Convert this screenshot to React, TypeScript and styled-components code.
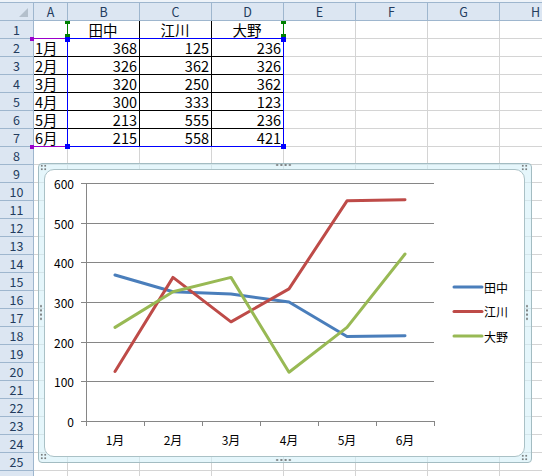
import styled, { createGlobalStyle } from "styled-components";

const GlobalStyle = createGlobalStyle`
  html, body {
    margin: 0;
    padding: 0;
    background: #ffffff;
    overflow: hidden;
  }
  body {
    width: 542px;
    height: 476px;
    font-family: "Noto Sans CJK JP", "Noto Sans", sans-serif;
  }
`;

const COLS = ["A", "B", "C", "D", "E", "F", "G", "H"];
const ROW_COUNT = 26;
const names = ["田中", "江川", "大野"];
const colors = ["#4a7ebb", "#be4b48", "#98b954"];
const table: [string, number, number, number][] = [
  ["1月", 368, 125, 236],
  ["2月", 326, 362, 326],
  ["3月", 320, 250, 362],
  ["4月", 300, 333, 123],
  ["5月", 213, 555, 236],
  ["6月", 215, 558, 421],
];

// Styled components
const Page = styled.div`
  position: relative;
  width: 542px;
  height: 476px;
  overflow: hidden;
  padding-top: 2px;
  box-sizing: border-box;
  background: #eef3f9;
`;

const Sheet = styled.div`
  display: grid;
  grid-template-columns: 34px 34px repeat(7, 72px);
  grid-template-rows: 19px repeat(${ROW_COUNT}, 18px);
  background: #ffffff;
`;

const HeadBase = styled.div`
  box-sizing: border-box;
  background: #dce6f2;
  border-right: 1px solid #9eb6ce;
  border-bottom: 1px solid #9eb6ce;
  color: #233c5e;
  font-size: 12.5px;
  line-height: 15px;
  display: flex;
  align-items: flex-end;
  justify-content: center;
  padding-bottom: 1px;
`;

const ColHead = styled(HeadBase)`
  border-top: 1px solid #9eb6ce;
`;

const Corner = styled(ColHead)`
  position: relative;
  &::after {
    content: "";
    position: absolute;
    right: 5px;
    bottom: 3px;
    border-style: solid;
    border-width: 0 0 9px 9px;
    border-color: transparent transparent #b4c0cc transparent;
  }
`;

const RowHead = styled(HeadBase)``;

const Cell = styled.div<{ $boxed?: boolean; $align?: string }>`
  box-sizing: border-box;
  border-right: 1px solid ${(p) => (p.$boxed ? "#000000" : "#d4d4d4")};
  border-bottom: 1px solid ${(p) => (p.$boxed ? "#000000" : "#d4d4d4")};
  font-size: 14.5px;
  line-height: 17px;
  color: #000;
  display: flex;
  align-items: flex-end;
  justify-content: ${(p) =>
    p.$align === "right" ? "flex-end" : p.$align === "center" ? "center" : "flex-start"};
  padding: 0 2px 0 1px;
  white-space: nowrap;
`;

// selected source ranges of the chart
const Range = styled.div<{ $x: number; $y: number; $w: number; $h: number; $c: string }>`
  position: absolute;
  left: ${(p) => p.$x}px;
  top: ${(p) => p.$y}px;
  width: ${(p) => p.$w}px;
  height: ${(p) => p.$h}px;
  box-sizing: border-box;
  border: 0 solid ${(p) => p.$c};
`;

const ValueRange = styled(Range)`
  border-width: 1px;
`;

const NameRange = styled(Range)`
  border-left-width: 1px;
  border-right-width: 1px;
`;

const CategoryRange = styled(Range)`
  border-top-width: 1px;
  border-bottom-width: 1px;
`;

const Handle = styled.span<{ $c: string; $pos: string; $w?: number; $h?: number }>`
  position: absolute;
  width: ${(p) => p.$w ?? 5}px;
  height: ${(p) => p.$h ?? 5}px;
  background: ${(p) => p.$c};
  ${(p) => (p.$pos.includes("t") ? "top: -2px;" : "bottom: -3px;")}
  ${(p) => (p.$pos.includes("l") ? "left: -3px;" : "right: -3px;")}
`;

const ChartFrame = styled.div`
  position: absolute;
  left: 38px;
  top: 163px;
  width: 494px;
  height: 300px;
  box-sizing: border-box;
  border: 1px solid #a3bcc2;
  border-radius: 4px;
  background: rgba(212, 240, 249, 0.6);
  padding: 5px 6px 5px 5px;
  display: flex;
`;

const ChartInner = styled.div`
  flex: 1;
  border: 1px solid #aac1c6;
  border-radius: 10px;
  background: #ffffff;
  overflow: hidden;
  display: flex;
`;

const Grip = styled.div<{ $x: number; $y: number; $w: number; $h: number; $sx: number; $sy: number }>`
  position: absolute;
  left: ${(p) => p.$x}px;
  top: ${(p) => p.$y}px;
  width: ${(p) => p.$w}px;
  height: ${(p) => p.$h}px;
  background-image: radial-gradient(circle at center, #7b7f80 0, #7b7f80 0.8px, transparent 1.3px);
  background-size: ${(p) => p.$sx}px ${(p) => p.$sy}px;
`;

const ChartText = styled.text`
  font-family: "Noto Sans CJK JP", "Noto Sans", sans-serif;
  font-size: 12px;
  fill: #000;
`;

// Chart geometry (page coordinates)
const X0 = 86;
const X1 = 434;
const Y_TOP = 183;
const Y_ZERO = 421;
const STEP = (X1 - X0) / 6;
const yOf = (v: number) => Y_ZERO - (v * (Y_ZERO - Y_TOP)) / 600;
const xOf = (i: number) => X0 + STEP * (i + 0.5);

const LineChart = () => {
  const ticks = [0, 100, 200, 300, 400, 500, 600];
  return (
    <svg width="479" height="286" viewBox="45 170 479 286">
      {ticks.map((t) => {
        const y = Math.round(yOf(t)) + 0.5;
        return (
          <g key={t}>
            <line x1={81} x2={X1} y1={y} y2={y} stroke="#868686" strokeWidth={1} />
            <ChartText x={74} y={y} textAnchor="end" dominantBaseline="central">
              {t}
            </ChartText>
          </g>
        );
      })}
      <line x1={X0 + 0.5} x2={X0 + 0.5} y1={Y_TOP} y2={Y_ZERO + 5} stroke="#868686" />
      {Array.from({ length: 6 }, (_, i) => {
        const x = Math.round(X0 + STEP * (i + 1)) + 0.5;
        return <line key={i} x1={x} x2={x} y1={Y_ZERO} y2={Y_ZERO + 5} stroke="#868686" />;
      })}
      {table.map((row, i) => (
        <ChartText key={row[0]} x={xOf(i)} y={445} textAnchor="middle">
          {row[0]}
        </ChartText>
      ))}
      {names.map((n, s) => (
        <polyline
          key={n}
          fill="none"
          stroke={colors[s]}
          strokeWidth={3}
          strokeLinejoin="round"
          strokeLinecap="round"
          points={table.map((row, i) => `${xOf(i)},${yOf(row[s + 1] as number)}`).join(" ")}
        />
      ))}
      {names.map((n, s) => {
        const y = 287 + s * 24.5;
        return (
          <g key={n}>
            <line x1={454} x2={482} y1={y} y2={y} stroke={colors[s]} strokeWidth={3} strokeLinecap="round" />
            <ChartText x={484} y={y} dominantBaseline="central" fontSize="12.5">
              {n}
            </ChartText>
          </g>
        );
      })}
    </svg>
  );
};

// Component
const App = () => {
  const cellText = (r: number, c: number): { text: string; align: string } => {
    if (r === 1) {
      if (c >= 1 && c <= 3) return { text: names[c - 1], align: "center" };
      return { text: "", align: "left" };
    }
    if (r >= 2 && r <= 7) {
      const row = table[r - 2];
      if (c === 0) return { text: row[0], align: "left" };
      if (c <= 3) return { text: String(row[c]), align: "right" };
    }
    return { text: "", align: "left" };
  };

  return (
    <>
      <GlobalStyle />
      <Page>
        <Sheet>
          <Corner />
          {COLS.map((c) => (
            <ColHead key={c}>{c}</ColHead>
          ))}
          {Array.from({ length: ROW_COUNT }, (_, ri) => {
            const r = ri + 1;
            return [
              <RowHead key={`h${r}`}>{r}</RowHead>,
              ...COLS.map((col, c) => {
                const { text, align } = cellText(r, c);
                return (
                  <Cell key={`${col}${r}`} $boxed={r <= 7 && c <= 3} $align={align}>
                    {text}
                  </Cell>
                );
              }),
            ];
          })}
        </Sheet>

        <NameRange $x={67} $y={21} $w={217} $h={17} $c="#008000">
          <Handle $c="#008000" $pos="tl" $w={5} $h={3} style={{ top: 0 }} />
          <Handle $c="#008000" $pos="tr" $w={5} $h={3} style={{ top: 0 }} />
          <Handle $c="#008000" $pos="bl" $w={5} $h={3} style={{ bottom: 1 }} />
          <Handle $c="#008000" $pos="br" $w={5} $h={3} style={{ bottom: 1 }} />
        </NameRange>

        <CategoryRange $x={33} $y={38} $w={34} $h={109} $c="#9a00cc">
          <Handle $c="#9a00cc" $pos="tl" $w={4} $h={4} />
          <Handle $c="#9a00cc" $pos="bl" $w={4} $h={4} />
        </CategoryRange>

        <ValueRange $x={67} $y={38} $w={217} $h={109} $c="#0000ff">
          <Handle $c="#0000ff" $pos="tl" />
          <Handle $c="#0000ff" $pos="tr" />
          <Handle $c="#0000ff" $pos="bl" />
          <Handle $c="#0000ff" $pos="br" />
        </ValueRange>

        <ChartFrame>
          <ChartInner>
            <LineChart />
          </ChartInner>
          <Grip $x={1} $y={0} $w={7} $h={7} $sx={3.5} $sy={3.5} />
          <Grip $x={482} $y={0} $w={7} $h={7} $sx={3.5} $sy={3.5} />
          <Grip $x={1} $y={289} $w={7} $h={7} $sx={3.5} $sy={3.5} />
          <Grip $x={482} $y={290} $w={7} $h={7} $sx={3.5} $sy={3.5} />
          <Grip $x={236} $y={-1} $w={17} $h={4} $sx={4.25} $sy={4} />
          <Grip $x={236} $y={294} $w={17} $h={4} $sx={4.25} $sy={4} />
          <Grip $x={0} $y={140} $w={4} $h={17} $sx={4} $sy={4.25} />
          <Grip $x={486} $y={140} $w={4} $h={17} $sx={4} $sy={4.25} />
        </ChartFrame>
      </Page>
    </>
  );
};

export default App;
